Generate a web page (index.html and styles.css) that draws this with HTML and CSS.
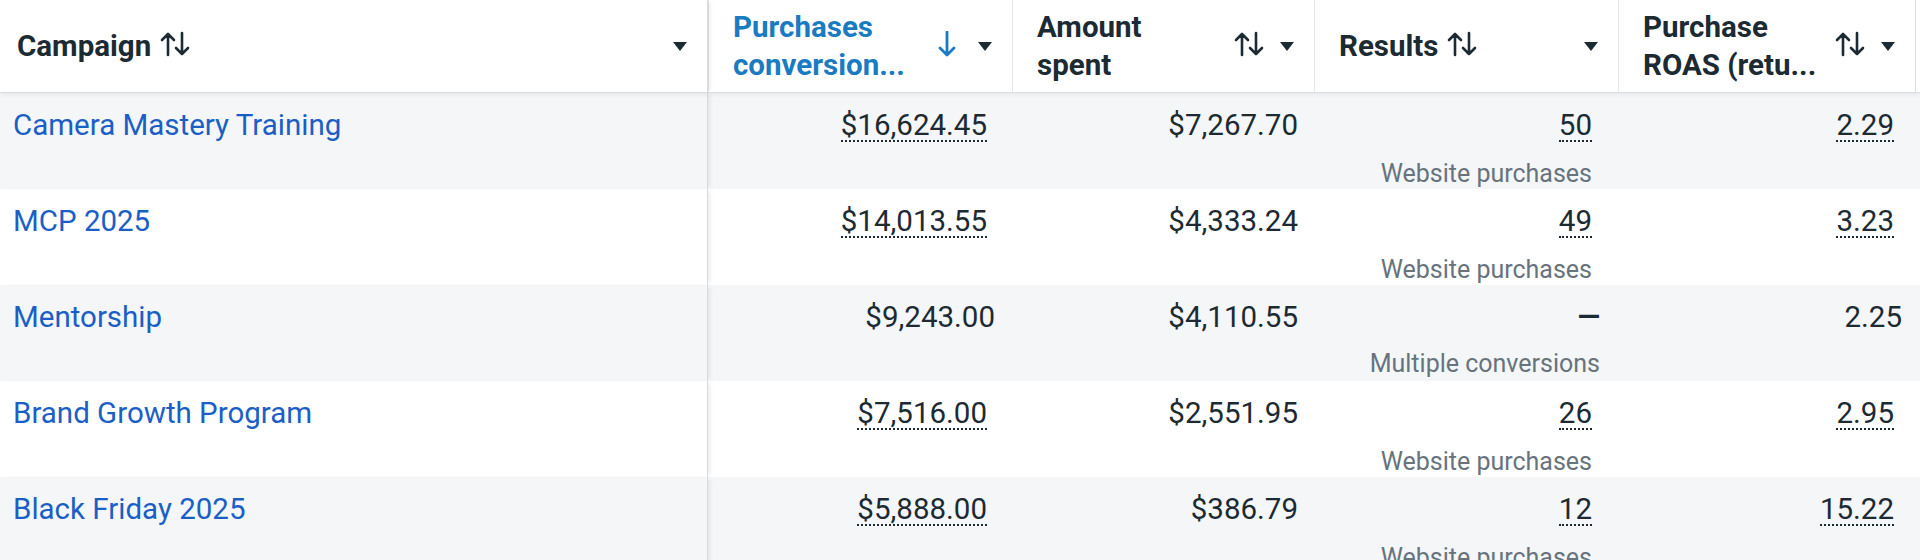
FILE: index.html
```html
<!DOCTYPE html>
<html lang="en">
<head>
<meta charset="utf-8">
<title>Campaigns</title>
<link rel="stylesheet" href="styles.css">
</head>
<body>
<div class="table">
  <div class="row head">
    <div class="cell hcell first">
      <div class="hlabel short">Campaign</div>
      <svg class="sort" viewBox="0 0 30 26"><path d="M8 24V3M2 9l6-6 6 6M22 2v21M16 17l6 6 6-6"/></svg>
      <span class="spacer"></span>
      <svg class="caret" viewBox="0 0 14 9"><path d="M0 0h14L7 9z"/></svg>
    </div>
    <div class="cell hcell sorted">
      <div class="hlabel wide">Purchases<br>conversion...</div>
      <svg class="sort down" viewBox="0 0 30 26"><path d="M15 1v23M8 17l7 7 7-7"/></svg>
      <svg class="caret" viewBox="0 0 14 9"><path d="M0 0h14L7 9z"/></svg>
    </div>
    <div class="cell hcell">
      <div class="hlabel wide">Amount<br>spent</div>
      <svg class="sort" viewBox="0 0 30 26"><path d="M8 24V3M2 9l6-6 6 6M22 2v21M16 17l6 6 6-6"/></svg>
      <svg class="caret" viewBox="0 0 14 9"><path d="M0 0h14L7 9z"/></svg>
    </div>
    <div class="cell hcell">
      <div class="hlabel short">Results</div>
      <svg class="sort" viewBox="0 0 30 26"><path d="M8 24V3M2 9l6-6 6 6M22 2v21M16 17l6 6 6-6"/></svg>
      <span class="spacer"></span>
      <svg class="caret" viewBox="0 0 14 9"><path d="M0 0h14L7 9z"/></svg>
    </div>
    <div class="cell hcell">
      <div class="hlabel wide">Purchase<br>ROAS (retu...</div>
      <svg class="sort" viewBox="0 0 30 26"><path d="M8 24V3M2 9l6-6 6 6M22 2v21M16 17l6 6 6-6"/></svg>
      <svg class="caret" viewBox="0 0 14 9"><path d="M0 0h14L7 9z"/></svg>
    </div>
    <div class="cell hcell rest"></div>
  </div>

  <div class="row alt">
    <div class="cell name first"><a class="link" href="#">Camera Mastery Training</a></div>
    <div class="cell num c2"><span class="val u">$16,624.45</span></div>
    <div class="cell num c3"><span class="val">$7,267.70</span></div>
    <div class="cell num c4 pad"><span class="val u">50</span><span class="sub">Website purchases</span></div>
    <div class="cell num c5"><span class="val u">2.29</span></div>
    <div class="cell rest"></div>
  </div>
  <div class="row">
    <div class="cell name first"><a class="link" href="#">MCP 2025</a></div>
    <div class="cell num c2"><span class="val u">$14,013.55</span></div>
    <div class="cell num c3"><span class="val">$4,333.24</span></div>
    <div class="cell num c4 pad"><span class="val u">49</span><span class="sub">Website purchases</span></div>
    <div class="cell num c5"><span class="val u">3.23</span></div>
    <div class="cell rest"></div>
  </div>
  <div class="row alt">
    <div class="cell name first"><a class="link" href="#">Mentorship</a></div>
    <div class="cell num c2"><span class="val plain">$9,243.00</span></div>
    <div class="cell num c3"><span class="val">$4,110.55</span></div>
    <div class="cell num c4"><span class="val dash">—</span><span class="sub">Multiple conversions</span></div>
    <div class="cell num c5"><span class="val plain">2.25</span></div>
    <div class="cell rest"></div>
  </div>
  <div class="row">
    <div class="cell name first"><a class="link" href="#">Brand Growth Program</a></div>
    <div class="cell num c2"><span class="val u">$7,516.00</span></div>
    <div class="cell num c3"><span class="val">$2,551.95</span></div>
    <div class="cell num c4 pad"><span class="val u">26</span><span class="sub">Website purchases</span></div>
    <div class="cell num c5"><span class="val u">2.95</span></div>
    <div class="cell rest"></div>
  </div>
  <div class="row alt">
    <div class="cell name first"><a class="link" href="#">Black Friday 2025</a></div>
    <div class="cell num c2"><span class="val u">$5,888.00</span></div>
    <div class="cell num c3"><span class="val">$386.79</span></div>
    <div class="cell num c4 pad"><span class="val u">12</span><span class="sub">Website purchases</span></div>
    <div class="cell num c5"><span class="val u">15.22</span></div>
    <div class="cell rest"></div>
  </div>
</div>
</body>
</html>
```

FILE: styles.css
```css
* { box-sizing: border-box; }

html, body {
  margin: 0;
  padding: 0;
  background: #ffffff;
  overflow: hidden;
}

body {
  font-family: Roboto, "Liberation Sans", Arial, sans-serif;
  color: #1c2b33;
  width: 1920px;
  height: 560px;
}

.table {
  display: flex;
  flex-direction: column;
}

.row {
  display: grid;
  grid-template-columns: 708px 304px 302px 304px 297px 5px;
  height: 96px;
  background: #ffffff;
}

.row.alt {
  background: #f4f6f8;
}

.row.head {
  height: 93px;
  background: #ffffff;
  border-bottom: 1px solid #dadde1;
  box-shadow: 0 2px 4px rgba(0, 0, 0, 0.06);
  position: relative;
  z-index: 2;
}

.cell {
  min-width: 0;
}

.first {
  border-right: 1px solid #d8dbdf;
  box-shadow: 4px 0 4px -2px rgba(0, 0, 0, 0.08);
  position: relative;
  z-index: 1;
}

.hcell {
  display: flex;
  align-items: center;
  padding: 0 20px 0 24px;
  border-left: 1px solid #e3e6ea;
  font-weight: 700;
  font-size: 29.5px;
  line-height: 38px;
  color: #1c2b33;
  white-space: nowrap;
}

.hcell.first {
  border-left: none;
  padding-left: 17px;
}

.hcell.rest {
  border-left: 1px solid #dadde1;
  padding: 0;
}

.hlabel.short {
  flex: none;
}

.hlabel.wide {
  flex: 1;
  min-width: 0;
}

.spacer {
  flex: 1;
}

.sort {
  width: 30px;
  height: 26px;
  flex: none;
  margin-left: 9px;
  margin-top: -4px;
  fill: none;
  stroke: #1c2b33;
  stroke-width: 2.6;
  stroke-linecap: round;
  stroke-linejoin: round;
}

.sorted {
  color: #1a7ac2;
}

.sort.down {
  stroke: #1a7ac2;
  stroke-width: 2.8;
}

.caret {
  width: 14px;
  height: 9px;
  flex: none;
  margin-left: 16px;
  fill: #1c2b33;
}

.name {
  padding: 14px 0 0 13px;
  font-size: 29.5px;
  line-height: 36px;
}

.link {
  color: #1b5fc6;
  text-decoration: none;
}

.num {
  display: flex;
  flex-direction: column;
  align-items: flex-end;
  padding-top: 14px;
  font-size: 29.5px;
  line-height: 36px;
}

.c2 { padding-right: 17px; }
.c3 { padding-right: 16px; }
.c4 { padding-right: 18px; }
.c5 { padding-right: 13px; }

.val.u {
  display: inline-block;
  line-height: 30px;
  margin-top: 3px;
  margin-bottom: 3px;
  border-bottom: 2px dotted #1c2b33;
}

.val.dash {
  font-weight: 700;
}

.c2 .val.u,
.c5 .val.u { margin-right: 8px; }
.c4.pad { padding-right: 26px; }

.sub {
  margin-top: 14px;
  font-size: 25px;
  line-height: 30px;
  color: #67737d;
}

.rest {
  background: transparent;
}
```
